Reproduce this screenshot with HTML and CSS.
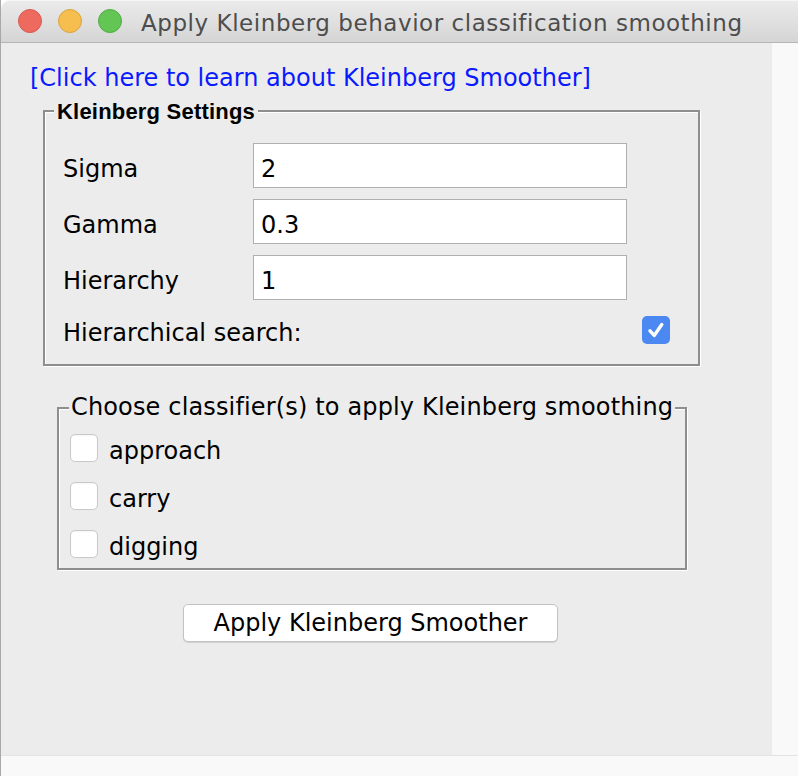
FILE: index.html
```html
<!DOCTYPE html>
<html>
<head>
<meta charset="utf-8">
<link rel="stylesheet" href="styles.css">
</head>
<body>
<div class="window">
  <div class="titlebar">
    <span class="light red"></span>
    <span class="light yellow"></span>
    <span class="light green"></span>
    <span class="title">Apply Kleinberg behavior classification smoothing</span>
  </div>
  <div class="main">
    <div class="content">
      <div class="link">[Click here to learn about Kleinberg Smoother]</div>
      <div class="group settings">
        <span class="legend bold">Kleinberg Settings</span>
        <div class="grid">
          <span class="label">Sigma</span><input class="field" value="2">
          <span class="label">Gamma</span><input class="field" value="0.3">
          <span class="label">Hierarchy</span><input class="field" value="1">
        </div>
        <div class="check-row">
          <span class="label-sm">Hierarchical search:</span>
          <span class="checkbox checked"><svg width="28" height="28" viewBox="0 0 28 28"><path d="M8 14.8 L12.2 19.4 L19.8 8.6" fill="none" stroke="#fff" stroke-width="3.4" stroke-linecap="round" stroke-linejoin="round"/></svg></span>
        </div>
      </div>
      <div class="group classifiers">
        <span class="legend normal">Choose classifier(s) to apply Kleinberg smoothing</span>
        <div class="opt"><span class="checkbox"></span><span class="opt-label">approach</span></div>
        <div class="opt"><span class="checkbox"></span><span class="opt-label">carry</span></div>
        <div class="opt"><span class="checkbox"></span><span class="opt-label">digging</span></div>
      </div>
      <button class="apply">Apply Kleinberg Smoother</button>
    </div>
    <div class="side"></div>
  </div>
  <div class="footer"></div>
</div>
</body>
</html>
```
FILE: styles.css
```css
html, body {
  margin: 0;
  padding: 0;
  background: #ffffff;
}
body {
  font-family: "DejaVu Sans", sans-serif;
  color: #000;
}
.window {
  width: 798px;
  height: 776px;
  border-left: 1px solid #a8a8a8;
  box-sizing: border-box;
  display: flex;
  flex-direction: column;
  overflow: hidden;
}
.titlebar {
  height: 43px;
  box-sizing: border-box;
  border-bottom: 1px solid #b6b6b6;
  border-top-left-radius: 9px;
  background: linear-gradient(#ebebeb, #d5d5d5);
  box-shadow: inset 0 1px 0 #f6f6f6;
  display: flex;
  align-items: center;
  padding-left: 17px;
  flex-shrink: 0;
}
.light {
  width: 24px;
  height: 24px;
  border-radius: 50%;
  box-sizing: border-box;
  margin-right: 16px;
}
.red { background: #ee6a5f; border: 1px solid #d55a4f; }
.yellow { background: #f5be4f; border: 1px solid #d9a440; }
.green { background: #62c554; border: 1px solid #53ab45; margin-right: 19px; }
.title {
  font-size: 23px;
  letter-spacing: 0.55px;
  color: #4d4d4d;
  white-space: nowrap;
  line-height: 26px;
  padding-top: 3px;
}
.main {
  height: 712px;
  display: flex;
  flex-shrink: 0;
}
.content {
  width: 771px;
  background: #ececec;
  flex-shrink: 0;
}
.side {
  flex: 1;
  background: #f9f9f9;
}
.footer {
  flex: 1;
  background: #f9f9f9;
  border-top: 1px solid #e3e3e3;
}
.link {
  margin: 22px 0 0 29px;
  font-size: 24px;
  line-height: 27px;
  color: #0a1aff;
  white-space: nowrap;
}
.group {
  position: relative;
  box-sizing: border-box;
  border: 2px solid #8e8e8e;
  box-shadow: inset 1px 1px 0 #ffffff, 1px 1px 0 #ffffff;
}
.legend {
  position: absolute;
  background: #ececec;
  white-space: nowrap;
}
.legend.bold {
  font-family: "Liberation Sans", Arial, sans-serif;
  font-weight: bold;
  font-size: 22px;
  letter-spacing: 0.2px;
  line-height: 24px;
  top: -12px;
  left: 9px;
  padding: 0 3px;
}
.legend.normal {
  font-size: 24px;
  line-height: 28px;
  letter-spacing: 0.15px;
  top: -16px;
  left: 10px;
  padding: 0 2px;
}
.settings {
  margin: 18px 0 0 42px;
  width: 657px;
  padding: 31px 28px 20px 18px;
}
.grid {
  display: grid;
  grid-template-columns: 190px 374px;
  grid-auto-rows: 45px;
  row-gap: 11px;
}
.label {
  font-size: 24px;
  line-height: 28px;
  padding-top: 12px;
}
.field {
  box-sizing: border-box;
  width: 374px;
  height: 45px;
  border: 1px solid #b0b0b0;
  background: #fff;
  font-family: "DejaVu Sans", sans-serif;
  font-size: 24px;
  line-height: 28px;
  padding: 7px 7px 0;
  margin: 0;
  color: #000;
  outline: none;
  border-radius: 0;
}
.check-row {
  margin-top: 16px;
  height: 28px;
  display: flex;
  justify-content: space-between;
  align-items: flex-start;
}
.label-sm {
  font-size: 24px;
  line-height: 28px;
  padding-top: 3px;
}
.checkbox {
  width: 28px;
  height: 28px;
  box-sizing: border-box;
  border-radius: 5px;
  display: block;
  flex-shrink: 0;
}
.checkbox.checked {
  background: #4b88f2;
}
.checkbox.checked svg { display: block; }
.classifiers {
  margin: 41px 0 0 56px;
  width: 630px;
  padding: 25px 11px 10px;
  display: flex;
  flex-direction: column;
  gap: 20px;
}
.opt {
  display: flex;
  align-items: flex-start;
  height: 28px;
  gap: 11px;
}
.opt .checkbox {
  background: #fff;
  border: 1px solid #c9c9c9;
  box-shadow: inset 0 1px 1px rgba(0,0,0,0.04);
}
.opt-label {
  font-size: 24px;
  line-height: 28px;
  padding-top: 3px;
}
.apply {
  display: block;
  margin: 34px 0 0 182px;
  width: 375px;
  height: 38px;
  box-sizing: border-box;
  background: #fff;
  border: 1px solid #c3c3c3;
  border-radius: 5px;
  box-shadow: 0 1px 1px rgba(0,0,0,0.12);
  font-family: "DejaVu Sans", sans-serif;
  font-size: 24px;
  line-height: 28px;
  color: #000;
  padding: 0;
}
```
